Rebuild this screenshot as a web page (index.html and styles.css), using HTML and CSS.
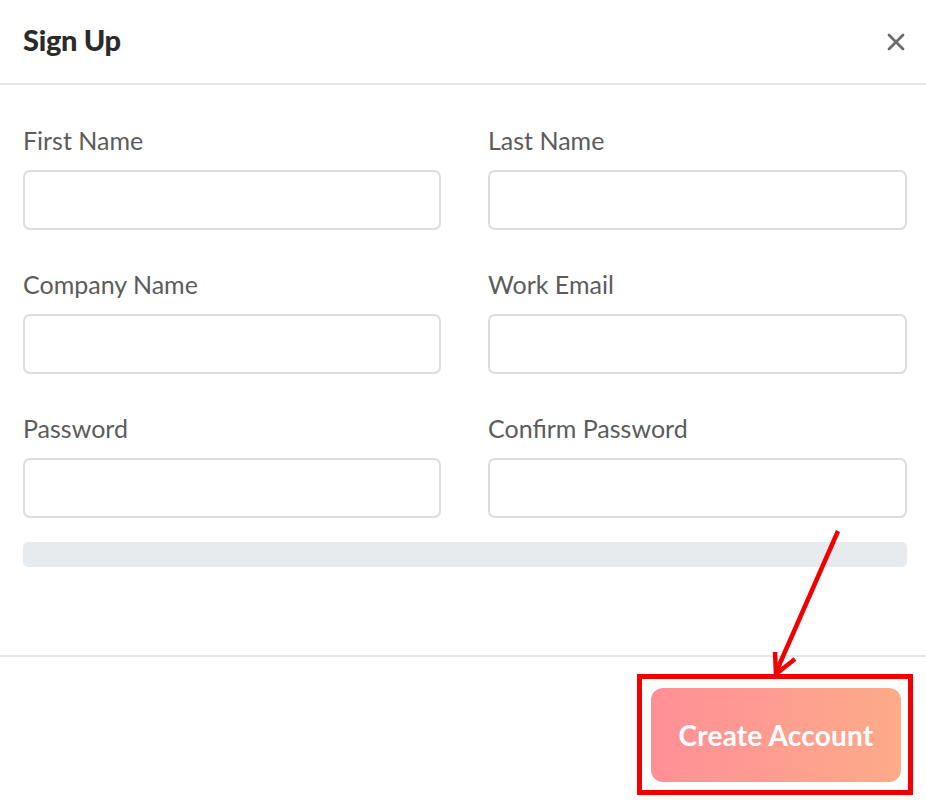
FILE: index.html
```html
<!DOCTYPE html>
<html lang="en">
<head>
  <meta charset="UTF-8" />
  <title>Sign Up</title>
  <link rel="stylesheet" href="styles.css">
</head>
<body>
  <div class="modal">
    <header class="modal-header">
      <h2>Sign Up</h2>
      <button class="close-btn" aria-label="Close">
        <svg width="18" height="18" viewBox="0 0 18 18"><path d="M2 2L16 16M16 2L2 16" stroke="#6b6b6b" stroke-width="2.8" stroke-linecap="round"/></svg>
      </button>
    </header>

    <main class="modal-body">
      <div class="fields">
        <div class="field">
          <label>First Name</label>
          <input type="text" />
        </div>
        <div class="field">
          <label>Last Name</label>
          <input type="text" />
        </div>
        <div class="field">
          <label>Company Name</label>
          <input type="text" />
        </div>
        <div class="field">
          <label>Work Email</label>
          <input type="email" />
        </div>
        <div class="field">
          <label>Password</label>
          <input type="password" />
        </div>
        <div class="field">
          <label>Confirm Password</label>
          <input type="password" />
        </div>
      </div>
      <div class="strength-bar"></div>
    </main>

    <footer class="modal-footer">
      <button class="create-btn">Create Account</button>
    </footer>

    <!-- annotation drawn over the screenshot -->
    <div class="highlight-box"></div>
    <svg class="arrow" width="926" height="809" viewBox="0 0 926 809">
      <path d="M838 531L777 670" stroke="#f20000" stroke-width="4.5" fill="none"/>
      <path d="M775 652L776 674L795 659" stroke="#f20000" stroke-width="4.5" fill="none" stroke-linejoin="miter"/>
    </svg>
  </div>
</body>
</html>
```

FILE: styles.css
```css
* {
  box-sizing: border-box;
}
body {
  margin: 0;
  background: #ffffff;
  font-family: 'Lato', 'Open Sans', sans-serif;
  color: #222;
}
.modal {
  position: relative;
  width: 926px;
  height: 809px;
  overflow: hidden;
}
.modal-header {
  height: 85px;
  display: flex;
  align-items: center;
  justify-content: space-between;
  padding: 0 17px 0 23px;
  border-bottom: 2px solid #e8e8e8;
}
.modal-header h2 {
  margin: 0 0 4px;
  font-size: 29px;
  font-weight: 900;
  color: #2b2b2b;
  letter-spacing: -0.3px;
}
.close-btn {
  background: none;
  border: none;
  padding: 4px;
  cursor: pointer;
  display: flex;
}
.modal-body {
  padding: 42px 19px 88px 23px;
  border-bottom: 2px solid #e8e8e8;
}
.fields {
  display: grid;
  grid-template-columns: 418px 419px;
  column-gap: 47px;
  row-gap: 41px;
}
.field label {
  display: block;
  height: 26px;
  line-height: 26px;
  font-size: 25px;
  color: #5c5c5c;
  margin-bottom: 17px;
}
.field input {
  display: block;
  width: 100%;
  height: 60px;
  border: 2px solid #dcdcdc;
  border-radius: 7px;
  background: #fff;
  outline: none;
}
.strength-bar {
  margin-top: 24px;
  height: 25px;
  width: 884px;
  background: #e8ebee;
  border-radius: 5px;
}
.modal-footer {
  display: flex;
  justify-content: flex-end;
  padding: 31px 25px 0 0;
}
.create-btn {
  width: 250px;
  height: 94px;
  border: none;
  border-radius: 12px;
  background: linear-gradient(90deg, #ff8f98, #fdab88);
  color: #fff;
  font-family: 'Lato', sans-serif;
  font-size: 28px;
  font-weight: 700;
  letter-spacing: 0.2px;
  cursor: pointer;
}
.highlight-box {
  position: absolute;
  left: 637px;
  top: 674px;
  width: 276px;
  height: 121px;
  border: 5px solid #f20000;
}
.arrow {
  position: absolute;
  left: 0;
  top: 0;
  pointer-events: none;
}
```
